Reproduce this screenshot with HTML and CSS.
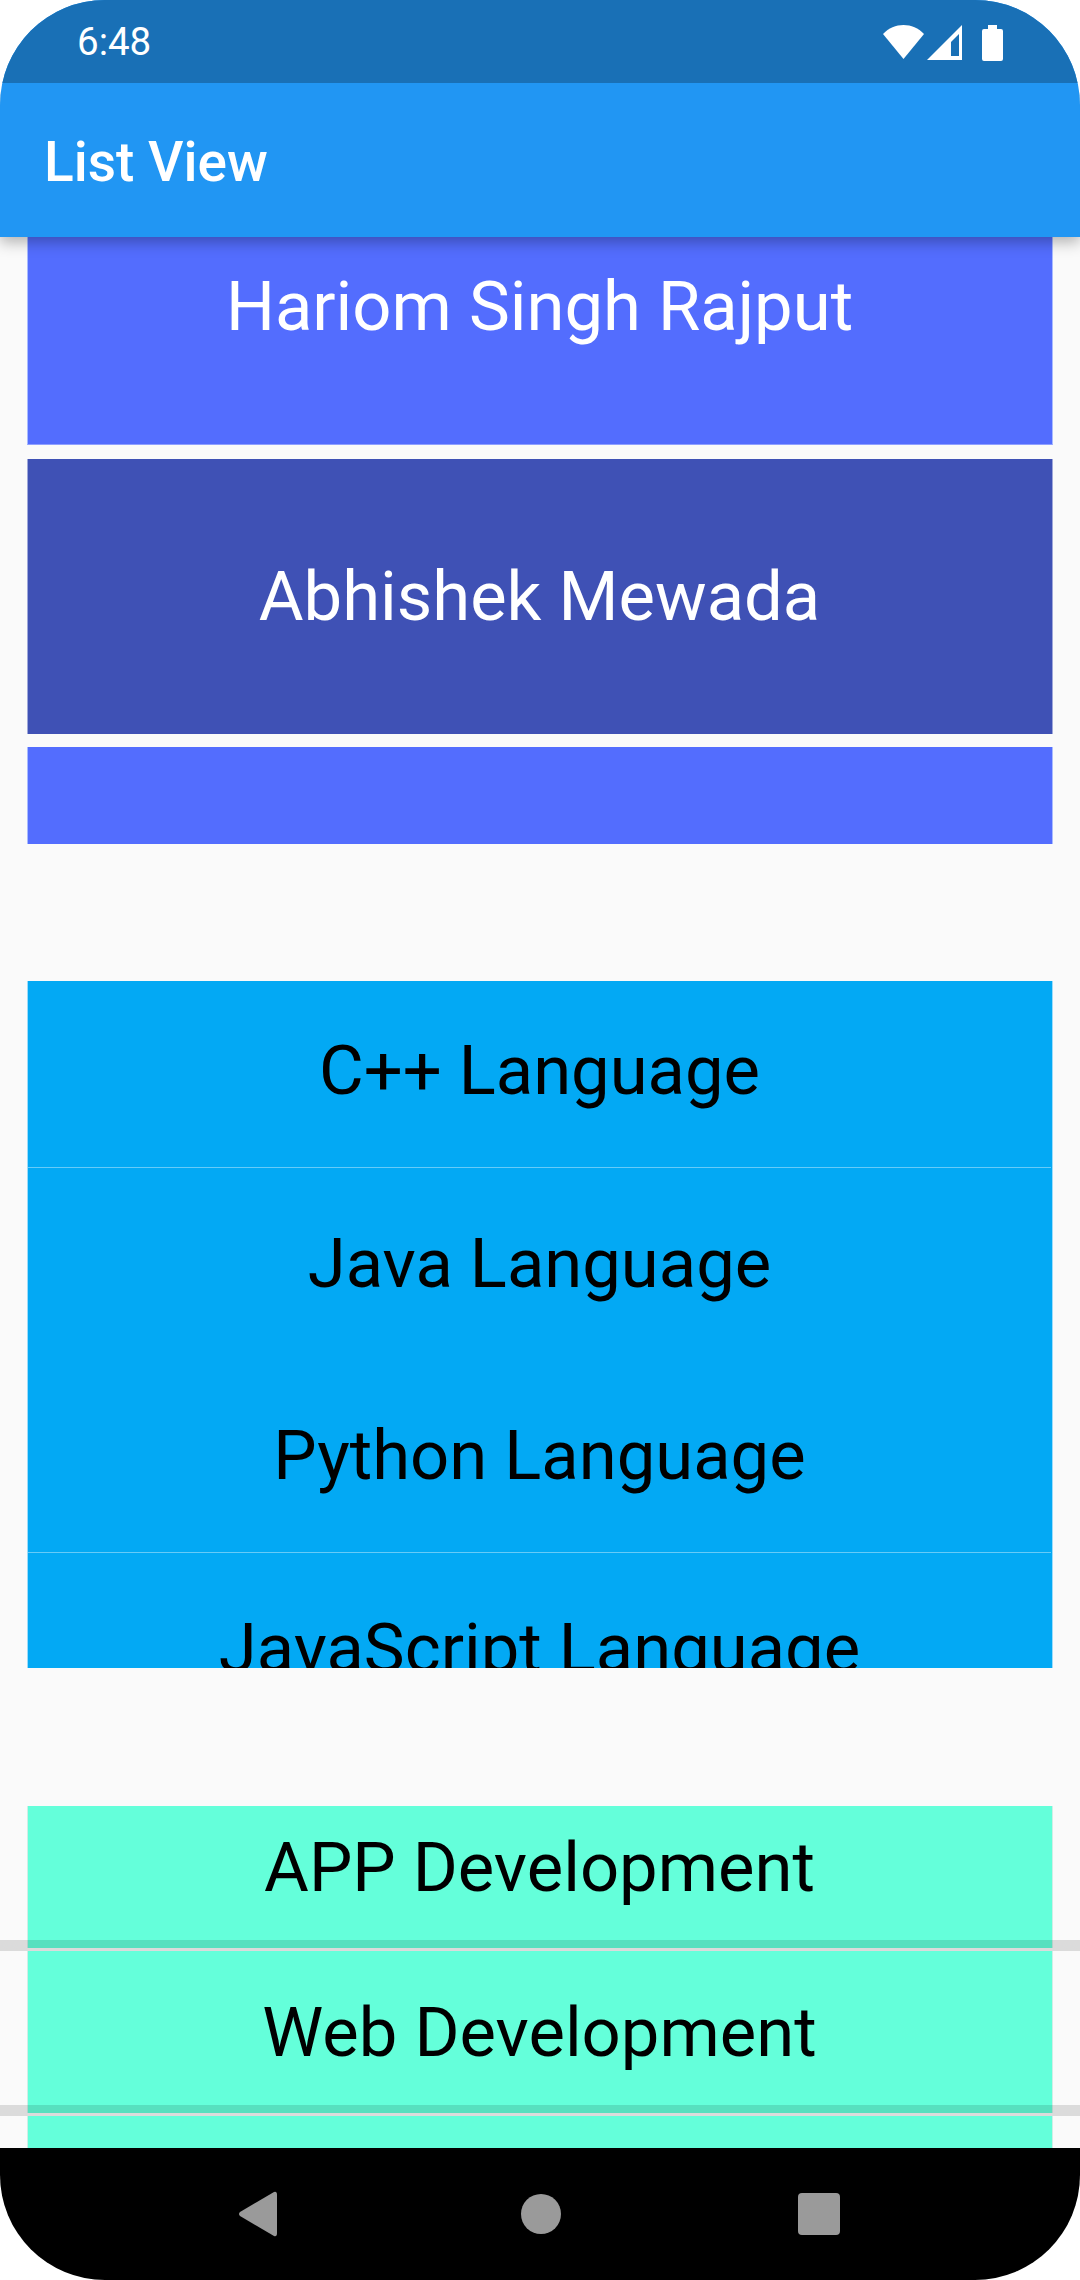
FILE: index.html
```html
<!DOCTYPE html>
<html lang="en">
<head>
  <meta charset="UTF-8" />
  <meta name="viewport" content="width=device-width, initial-scale=1" />
  <title>List View</title>
  <link rel="stylesheet" href="styles.css">
</head>
<body>
  <div class="screen">
    <header class="app-header">
      <div class="status-bar">
        <span class="status-time">6:48</span>
        <svg class="status-icons" width="122" height="38" viewBox="0 0 122 38">
          <path class="icon-white" d="M1 10 C12 -2 31 -2 42 10 L21.5 35 Z" />
          <path class="icon-white" d="M45 36 L80 1 V36 Z" />
          <path class="icon-dark" d="M69 32 H77 V10 L69 18 Z" />
          <path class="icon-white" d="M106 1 H115 V5 H119 Q121 5 121 7 V35 Q121 37 119 37 H102 Q100 37 100 35 V7 Q100 5 102 5 H106 Z" />
        </svg>
      </div>
      <div class="toolbar">List View</div>
    </header>

    <main class="content">
      <!-- names list, scrolled a bit -->
      <section class="list list-names">
        <div class="name-card name-light">Hariom Singh Rajput</div>
        <div class="name-card name-dark">Abhishek Mewada</div>
        <div class="name-card name-light"></div>
      </section>

      <section class="list list-langs">
        <div class="lang-row lang-line">C++ Language</div>
        <div class="lang-row">Java Language</div>
        <div class="lang-row lang-line">Python Language</div>
        <div class="lang-row">JavaScript Language</div>
      </section>

      <section class="list list-dev">
        <div class="dev-row">APP Development</div>
        <div class="dev-divider"></div>
        <div class="dev-row">Web Development</div>
        <div class="dev-divider"></div>
        <div class="dev-row"></div>
      </section>
    </main>

    <nav class="nav-bar">
      <svg class="nav-back" width="40" height="46" viewBox="0 0 40 46">
        <path class="icon-nav" d="M36 1 Q39 0 39 4 V42 Q39 46 36 45 L2 25 Q0 23 2 21 Z" />
      </svg>
      <svg width="42" height="42" viewBox="0 0 42 42">
        <circle class="icon-nav" cx="21" cy="21" r="20" />
      </svg>
      <svg width="42" height="42" viewBox="0 0 42 42">
        <rect class="icon-nav" x="0" y="0" width="42" height="42" rx="4" />
      </svg>
    </nav>
  </div>
</body>
</html>
```

FILE: styles.css
```css
* {
  box-sizing: border-box;
}
body {
  margin: 0;
  background: white;
  font-family: Roboto, sans-serif;
}
.screen {
  width: 1080px;
  height: 2280px;
  display: flex;
  flex-direction: column;
  overflow: hidden;
  border-radius: 105px;
  background: #fafafa;
}

/* header */
.app-header {
  position: relative;
  z-index: 2;
  background: #2196f3;
  box-shadow: 0 5px 14px rgba(0, 0, 0, 0.3);
}
.status-bar {
  height: 83px;
  padding: 0 20px 0 77px;
  display: flex;
  align-items: center;
  justify-content: space-between;
  background: #1970b6;
  color: white;
}
.status-time {
  font-size: 38.5px;
}
.status-icons {
  margin-top: 3px;
  margin-right: 56px;
}
.icon-white {
  fill: white;
}
.icon-dark {
  fill: #1970b6;
}
.toolbar {
  height: 154px;
  padding: 3px 0 0 44px;
  display: flex;
  align-items: center;
  color: white;
  font-size: 55px;
  font-weight: 500;
}

/* lists */
.content {
  flex: 1;
  min-height: 0;
  display: flex;
  flex-direction: column;
}
.list {
  flex: none;
  overflow: hidden;
  color: black;
  text-align: center;
}
.list-names {
  height: 607px;
  color: white;
}
.name-card {
  height: 275px;
  margin: 0 27px 13px;
  padding-right: 1px;
  display: flex;
  align-items: center;
  justify-content: center;
  font-size: 68.75px;
  border-left: 1px solid #a9bbff;
  border-right: 1px solid #a9bbff;
}
.name-card:first-child {
  height: 276px;
  margin-top: -68px;
  margin-bottom: 14px;
  border-bottom: 1px solid #8fa0ff;
}
.name-light {
  background: #536dfe;
}
.name-dark {
  background: #3f51b5;
  border-color: #9fa8da;
}
.list-langs {
  height: 687px;
  margin: 137px 27px 138px;
  padding-right: 1px;
  background: #03a9f4;
  border-left: 1px solid #9cdcfa;
  border-right: 1px solid #9cdcfa;
}
.lang-row {
  height: 192.5px;
  display: flex;
  align-items: center;
  justify-content: center;
  font-size: 68.75px;
}
.lang-row:first-child {
  margin-top: -6px;
}
.lang-line {
  border-bottom: 1px solid rgba(255, 255, 255, 0.4);
}
.list-dev {
  height: 342px;
}
.dev-row {
  height: 162px;
  margin: 0 27px;
  padding-right: 1px;
  display: flex;
  align-items: center;
  justify-content: center;
  font-size: 68.75px;
  background: #64ffda;
  border-left: 1px solid #cfeee6;
  border-right: 1px solid #cfeee6;
}
.dev-row:first-child {
  margin-top: -20px;
}
.dev-divider {
  height: 11px;
  margin-top: -8px;
  background: rgba(0, 0, 0, 0.12);
}

/* bottom nav */
.nav-bar {
  flex: none;
  height: 132px;
  padding-right: 3px;
  display: flex;
  align-items: center;
  justify-content: center;
  gap: 236px;
  background: black;
}
.nav-back {
  margin-right: 6px;
}
.icon-nav {
  fill: #9a9a9a;
}
```
